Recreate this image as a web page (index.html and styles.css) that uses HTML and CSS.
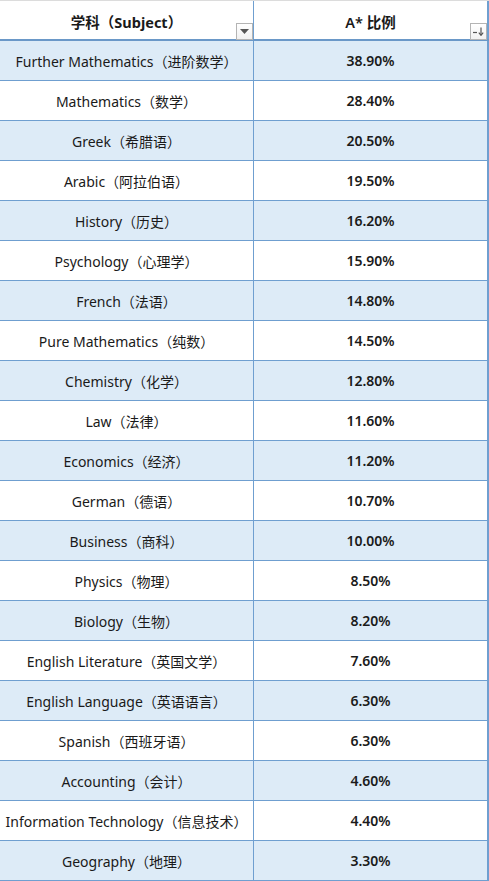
FILE: index.html
```html
<!DOCTYPE html>
<html lang="zh-CN">
<head>
<meta charset="utf-8">
<title>A* 比例</title>
<link rel="stylesheet" href="styles.css">
</head>
<body>
<div class="sheet">
  <div class="row head">
    <div class="cell subj">学科（Subject）<span class="filter"><svg width="9" height="5" viewBox="0 0 9 5"><path d="M0 0H9L4.5 5Z" fill="#555"/></svg></span></div>
    <div class="cell pct">A* 比例<span class="filter"><svg width="13" height="9" viewBox="0 0 13 9"><path d="M1 5.5H5" stroke="#555" stroke-width="1.2"/><path d="M9 0.5V8" stroke="#555" stroke-width="1.2"/><path d="M6.8 5.6L9 8.4L11.2 5.6" fill="none" stroke="#555" stroke-width="1.1"/></svg></span></div>
  </div>
  <div class="row alt"><div class="cell subj">Further Mathematics（进阶数学）</div><div class="cell pct">38.90%</div></div>
  <div class="row"><div class="cell subj">Mathematics（数学）</div><div class="cell pct">28.40%</div></div>
  <div class="row alt"><div class="cell subj">Greek（希腊语）</div><div class="cell pct">20.50%</div></div>
  <div class="row"><div class="cell subj">Arabic（阿拉伯语）</div><div class="cell pct">19.50%</div></div>
  <div class="row alt"><div class="cell subj">History（历史）</div><div class="cell pct">16.20%</div></div>
  <div class="row"><div class="cell subj">Psychology（心理学）</div><div class="cell pct">15.90%</div></div>
  <div class="row alt"><div class="cell subj">French（法语）</div><div class="cell pct">14.80%</div></div>
  <div class="row"><div class="cell subj">Pure Mathematics（纯数）</div><div class="cell pct">14.50%</div></div>
  <div class="row alt"><div class="cell subj">Chemistry（化学）</div><div class="cell pct">12.80%</div></div>
  <div class="row"><div class="cell subj">Law（法律）</div><div class="cell pct">11.60%</div></div>
  <div class="row alt"><div class="cell subj">Economics（经济）</div><div class="cell pct">11.20%</div></div>
  <div class="row"><div class="cell subj">German（德语）</div><div class="cell pct">10.70%</div></div>
  <div class="row alt"><div class="cell subj">Business（商科）</div><div class="cell pct">10.00%</div></div>
  <div class="row"><div class="cell subj">Physics（物理）</div><div class="cell pct">8.50%</div></div>
  <div class="row alt"><div class="cell subj">Biology（生物）</div><div class="cell pct">8.20%</div></div>
  <div class="row"><div class="cell subj">English Literature（英国文学）</div><div class="cell pct">7.60%</div></div>
  <div class="row alt"><div class="cell subj">English Language（英语语言）</div><div class="cell pct">6.30%</div></div>
  <div class="row"><div class="cell subj">Spanish（西班牙语）</div><div class="cell pct">6.30%</div></div>
  <div class="row alt"><div class="cell subj">Accounting（会计）</div><div class="cell pct">4.60%</div></div>
  <div class="row"><div class="cell subj">Information Technology（信息技术）</div><div class="cell pct">4.40%</div></div>
  <div class="row alt"><div class="cell subj">Geography（地理）</div><div class="cell pct">3.30%</div></div>
</div>
</body>
</html>
```
FILE: styles.css
```css
html, body {
  margin: 0;
  padding: 0;
  background: #ffffff;
}
.sheet {
  width: 489px;
  font-family: "Noto Sans", "Noto Sans CJK SC", sans-serif;
  font-size: 14px;
  color: #1a1a1a;
}
.row {
  display: grid;
  grid-template-columns: 254px 235px;
  height: 40px;
  box-sizing: border-box;
  border-bottom: 1px solid #6f9fd0;
}
.row.alt {
  background: #ddebf7;
}
.row.head {
  height: 41px;
  border-top: 1px solid #dcdcdc;
  border-bottom: 2px solid #6a98c8;
  font-weight: 700;
  font-size: 14.5px;
}
.cell {
  display: flex;
  align-items: center;
  justify-content: center;
  white-space: nowrap;
  position: relative;
}
.cell.subj {
  border-right: 1px solid #6f9fd0;
}
.cell.pct {
  border-right: 2px solid #6f9fd0;
  font-weight: 600;
}
.head .cell {
  padding-top: 2px;
}
.filter {
  position: absolute;
  right: 0;
  bottom: -1px;
  width: 15px;
  height: 15px;
  border: 1px solid #b4b4b4;
  background: linear-gradient(#ffffff, #f1f1f1);
  display: flex;
  align-items: center;
  justify-content: center;
}
```
